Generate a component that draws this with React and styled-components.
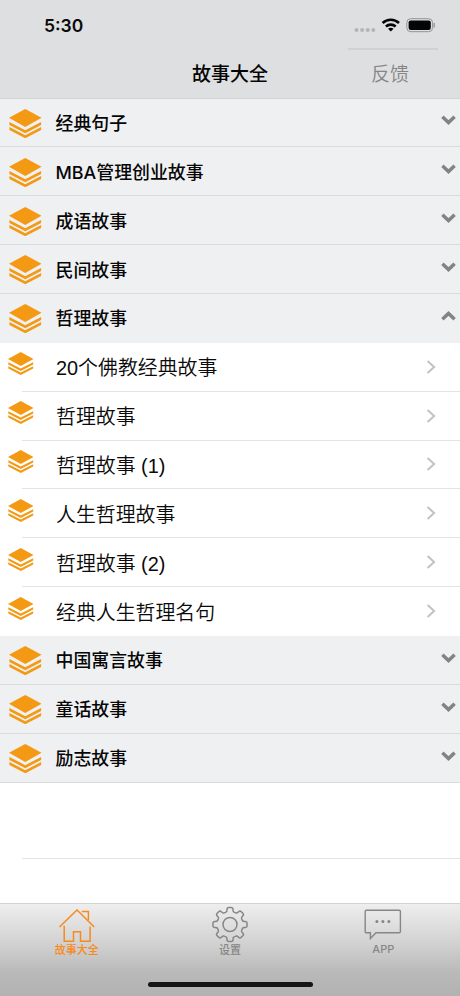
import React, { Component } from 'react'
import styled, { createGlobalStyle } from 'styled-components'

const GlobalStyle = createGlobalStyle`
  * {
    box-sizing: border-box;
  }

  body {
    margin: 0;
    background: #fff;
    font-family: "Inter", "Noto Sans CJK SC", sans-serif;
  }

  svg {
    display: block;
    flex: none;
  }
`

const Screen = styled.div`
  display: flex;
  flex-direction: column;
  width: 460px;
  height: 996px;
  overflow: hidden;
  background: #fff;
`

const Header = styled.header`
  flex: none;
  height: 98.5px;
  background: #dedfe1;
  border-bottom: 1px solid #d3d4d6;
`

const StatusBar = styled.div`
  display: flex;
  justify-content: space-between;
  height: 48px;
  padding: 15px 25px 0 44px;
`

const Time = styled.div`
  font-size: 17.5px;
  line-height: 22px;
  font-weight: 600;
  color: #0b0b0b;
`

const NavBar = styled.div`
  display: grid;
  grid-template-columns: 1fr 90px 1fr;
  height: 49px;
`

const Title = styled.h1`
  grid-column: 2;
  margin: 0;
  padding-top: 2px;
  font-size: 19px;
  line-height: 50px;
  font-weight: 500;
  text-align: center;
  white-space: nowrap;
  color: #050505;
`

const Feedback = styled.button`
  justify-self: end;
  width: 90px;
  margin-right: 22px;
  padding: 0;
  border: 0;
  border-top: 2px solid #d0d1d3;
  background: none;
  font-family: inherit;
  font-size: 19px;
  line-height: 46px;
  font-weight: 350;
  color: #858585;
  text-align: center;
  text-indent: -6px;
`

const List = styled.main`
  flex: 1;
`

const GroupRow = styled.div`
  display: flex;
  align-items: center;
  height: 48.86px;
  padding: 2px 4px 0 9px;
  background: #eff0f2;
  border-bottom: 1px solid ${props => props.$open ? '#eff0f2' : '#dadbdd'};
`

const GroupName = styled.div`
  flex: 1;
  margin-left: 14px;
  padding-top: 1px;
  font-size: 17.9px;
  line-height: 26px;
  font-weight: 500;
  color: #060606;
`

const ChevronBox = styled.div`
  margin-bottom: 6px;
`

const StoryRow = styled.div`
  display: flex;
  height: 48.86px;
  padding-left: 8px;
`

const StoryIcon = styled.div`
  width: 14px;
  padding-top: 9.5px;
`

const StoryBody = styled.div`
  flex: 1;
  display: flex;
  align-items: center;
  justify-content: space-between;
  padding: 0 24px 0 34px;
  border-bottom: 1px solid ${props => props.$last ? 'transparent' : '#e4e4e5'};
  font-family: "Liberation Sans", "Noto Sans CJK SC", sans-serif;
  font-size: 19.9px;
  font-weight: 350;
  color: #0a0a0a;
`

const EmptyRow = styled.div`
  height: 76px;
  margin-left: 22px;
  border-bottom: 1px solid #e4e4e5;
`

const TabBar = styled.nav`
  flex: none;
  display: flex;
  flex-direction: column;
  justify-content: space-between;
  height: 93px;
  padding-bottom: 9px;
  border-top: 1px solid #d2d2d2;
  background: linear-gradient(#eeeeee, #d0d0d0 45%, #b9b9b9 75%, #b2b2b2);
`

const Tabs = styled.div`
  display: grid;
  grid-template-columns: repeat(3, 1fr);
`

const Tab = styled.div`
  display: flex;
  flex-direction: column;
  align-items: center;
  padding-top: 2px;
  font-size: 11px;
  line-height: 14px;
  font-weight: 500;
  color: ${props => props.$active ? '#f78a1d' : '#868686'};
`

const LatinLabel = styled.span`
  line-height: 13px;
`

const HomeIndicator = styled.div`
  align-self: center;
  width: 165px;
  height: 5.5px;
  border-radius: 3px;
  background: #151515;
`

const StatusIcons = () => (
  <svg width="82" height="20" viewBox="0 0 82 20">
    <g fill="#b4b5b7">
      <circle cx="3.5" cy="15" r="2" />
      <circle cx="9.1" cy="15" r="2" />
      <circle cx="14.7" cy="15" r="2" />
      <circle cx="20.3" cy="15" r="2" />
    </g>
    <g fill="none" stroke="#050505" strokeWidth="2.6">
      <path d="M29.6 8a12 12 0 0 1 16.4 0" />
      <path d="M32.9 11.5a7.2 7.2 0 0 1 9.8 0" />
    </g>
    <path d="M35 13.8a4.4 4.4 0 0 1 5.6 0L37.8 16.6z" fill="#050505" />
    <rect x="53.8" y="3.7" width="25.8" height="13" rx="4" fill="none" stroke="#929394" />
    <rect x="55.6" y="5.4" width="22.2" height="9.6" rx="2.2" fill="#050505" />
    <path d="M81.2 8v4.4" stroke="#929394" strokeWidth="1.3" />
  </svg>
)

const Layers = ({ size }) => (
  <svg width={size} height={size * 0.9} viewBox="0 0 32 28.8">
    <g fill="#f39913">
      <path d="M16 0 32 8.7 16 17.6 0 8.7z" />
      <path d="M.4 12.8 16 20.8l15.6-8v2.9L16 23.8.4 15.7z" />
      <path d="M.4 17.8 16 25.8l15.6-8v2.9L16 28.8.4 20.7z" />
    </g>
  </svg>
)

const Chevron = ({ up }) => (
  <svg width="15" height="10" viewBox="0 0 15 10">
    <path d={up ? 'M1.4 8.2 7.5 2.5 13.6 8.2' : 'M1.4 1.8 7.5 7.5 13.6 1.8'} fill="none" stroke="#828385" strokeWidth="3.5" />
  </svg>
)

const Disclosure = () => (
  <svg width="10" height="14" viewBox="0 0 10 14">
    <path d="M1.6 1 8.1 7l-6.5 6" fill="none" stroke="#c2c2c4" strokeWidth="2" />
  </svg>
)

const HomeIcon = () => (
  <svg width="38" height="37" viewBox="0 0 38 37" fill="none" stroke="#f78a1d" strokeWidth="1.5">
    <path d="M1.5 21 19 4l17.2 17" />
    <path d="M23.8 5.6h6.6v8.5" />
    <path d="M6.2 19.7v15.6h9.3V25.7h7V35.3h9.6V20.4" />
  </svg>
)

const toothShape = [[-22.5, 13], [-13, 13.2], [-10, 17.3], [10, 17.3], [13, 13.2]]

const gearPath = () => {
  const points = []
  for (let i = 0; i < 8; i++) {
    toothShape.forEach(([deg, r]) => {
      const a = (i * 45 + deg) * Math.PI / 180
      points.push([19 + r * Math.sin(a), 18.5 - r * Math.cos(a)])
    })
  }
  // every corner is cut short and bridged with a curve
  const parts = points.map((p, i) => {
    const prev = points[(i + points.length - 1) % points.length]
    const next = points[(i + 1) % points.length]
    const near = q => {
      const t = Math.min(0.45, 1.9 / Math.hypot(q[0] - p[0], q[1] - p[1]))
      return (p[0] + (q[0] - p[0]) * t).toFixed(2) + ' ' + (p[1] + (q[1] - p[1]) * t).toFixed(2)
    }
    return `${i ? 'L' : 'M'}${near(prev)}Q${p[0].toFixed(2)} ${p[1].toFixed(2)} ${near(next)}`
  })
  return parts.join('') + 'Z'
}

const GearIcon = () => (
  <svg width="38" height="37" viewBox="0 0 38 37" fill="none" stroke="#868686" strokeWidth="1.5">
    <path d={gearPath()} />
    <circle cx="19" cy="18.5" r="7" />
  </svg>
)

const ChatIcon = () => (
  <svg width="38" height="37" viewBox="0 0 38 37" fill="none" stroke="#868686" strokeWidth="1.4">
    <path d="M2.4 4.2h32.8q1.2 0 1.2 1.2v20.2q0 1.2-1.2 1.2H12l-5.6 5.7v-5.7h-4q-1.2 0-1.2-1.2V5.4q0-1.2 1.2-1.2z" />
    <g fill="#868686" stroke="none">
      <circle cx="12.9" cy="15.4" r="1.5" />
      <circle cx="18.9" cy="15.4" r="1.5" />
      <circle cx="24.9" cy="15.4" r="1.5" />
    </g>
  </svg>
)

const groups = [
  { name: '经典句子' },
  { name: 'MBA管理创业故事' },
  { name: '成语故事' },
  { name: '民间故事' },
  {
    name: '哲理故事',
    stories: ['20个佛教经典故事', '哲理故事', '哲理故事 (1)', '人生哲理故事', '哲理故事 (2)', '经典人生哲理名句']
  },
  { name: '中国寓言故事' },
  { name: '童话故事' },
  { name: '励志故事' }
]

class App extends Component {

  renderGroup = ({ name, stories }) => (
    <React.Fragment key={name}>
      <GroupRow $open={!!stories}>
        <Layers size={32.5} />
        <GroupName>{name}</GroupName>
        <ChevronBox><Chevron up={!!stories} /></ChevronBox>
      </GroupRow>
      {stories && stories.map((story, i) => (
        <StoryRow key={story}>
          <StoryIcon><Layers size={25.5} /></StoryIcon>
          <StoryBody $last={i === stories.length - 1}>
            {story}
            <Disclosure />
          </StoryBody>
        </StoryRow>
      ))}
    </React.Fragment>
  )

  render() {
    return (
      <Screen>
        <GlobalStyle />
        <Header>
          <StatusBar>
            <Time>5:30</Time>
            <StatusIcons />
          </StatusBar>
          <NavBar>
            <Title>故事大全</Title>
            <Feedback>反馈</Feedback>
          </NavBar>
        </Header>
        <List>
          {groups.map(this.renderGroup)}
          <EmptyRow />
        </List>
        <TabBar>
          <Tabs>
            <Tab $active><HomeIcon />故事大全</Tab>
            <Tab><GearIcon />设置</Tab>
            <Tab><ChatIcon /><LatinLabel>APP</LatinLabel></Tab>
          </Tabs>
          <HomeIndicator />
        </TabBar>
      </Screen>
    )
  }
}

export default App
